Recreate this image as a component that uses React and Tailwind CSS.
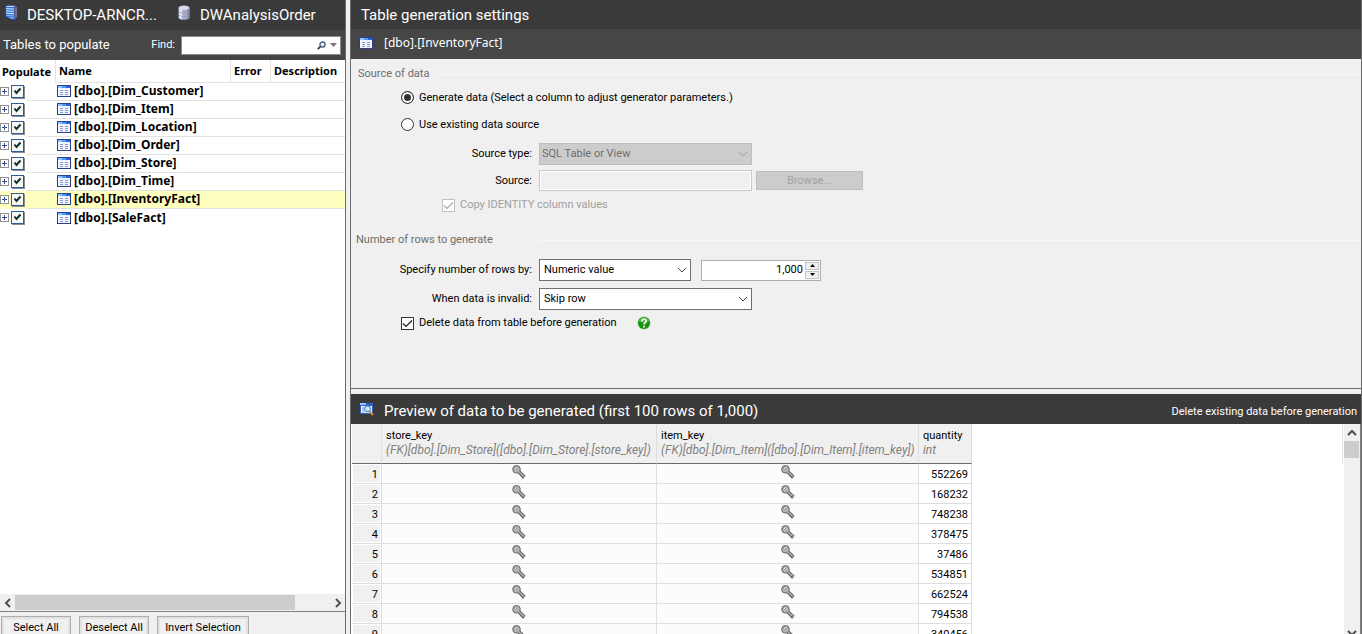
import React, { useState } from "react";

const TABLES = [
  "[dbo].[Dim_Customer]",
  "[dbo].[Dim_Item]",
  "[dbo].[Dim_Location]",
  "[dbo].[Dim_Order]",
  "[dbo].[Dim_Store]",
  "[dbo].[Dim_Time]",
  "[dbo].[InventoryFact]",
  "[dbo].[SaleFact]",
];

const QUANTITIES = [552269, 168232, 748238, 378475, 37486, 534851, 662524, 794538, 340456];

function ServerIcon() {
  return (
    <svg width="16" height="16" viewBox="0 0 16 16" aria-hidden="true">
      <path d="M1 1.5 3 0h9l2 1.500v10.500l-2.500 3H8L1.500 12z" fill="#333a66" />
      <path d="M1.500 2H10l.5 12.500H8L2 11.500z" fill="#3474de" />
      <path d="M1.500 2 3.200.8h8.300L10 2z" fill="#b3cdf5" />
      <path d="M2 3.800 10 4M2 6l8 .3M2 8.200l8 .4" stroke="#cfe4ff" strokeWidth="1.100" />
      <path d="m2.500 10.400 7.500.6M5 12.600l5 .5" stroke="#8dbaf8" />
      <path d="M10.500 2.200 13 1.800v10l-2.500 3z" fill="#6c6f96" />
    </svg>
  );
}

function DatabaseIcon() {
  return (
    <svg width="14" height="16" viewBox="0 0 14 16" aria-hidden="true">
      <path d="M1.500 3v9.500c0 3 11 3 11 0V3z" fill="#a7adc6" />
      <path d="M2 3v9.500c0 1 1.300 1.700 3.300 1.900V4z" fill="#dfe3f3" />
      <path d="M10.500 4v10c1.300-.4 2-.9 2-1.500V3z" fill="#7a809e" />
      <ellipse cx="7" cy="2.800" rx="5.500" ry="2.200" fill="#d3d8ea" />
      <path d="M1.500 6.200c0 2.600 11 2.600 11 0M1.500 9.500c0 2.600 11 2.600 11 0" fill="none" stroke="#8f95b2" strokeWidth=".7" />
    </svg>
  );
}

function TableIcon() {
  return (
    <svg className="shrink-0" width="14" height="12" viewBox="0 0 14 12" shapeRendering="crispEdges" aria-hidden="true">
      <path d="M0 0h14v12H0z" fill="#2f3f86" />
      <path d="M1 3h12v8H1z" fill="#f0f4ff" />
      <path d="M1 1h4v2H1z" fill="#8fc4ff" />
      <path d="M5 1h4v2H5z" fill="#4f9af0" />
      <path d="M9 1h4v2H9z" fill="#1f66d8" />
      <path d="M3 5.500h3M3 7.500h3M3 9.500h3M8 5.500h3M8 7.500h3M8 9.500h3" stroke="#8a9bcb" />
    </svg>
  );
}

function PreviewIcon() {
  return (
    <svg width="14" height="13" viewBox="0 0 14 13" aria-hidden="true">
      <path d="M0 0h13v11H0z" fill="#2d5fc4" />
      <path d="M1 3h11v7H1z" fill="#e9f1ff" />
      <path d="M0 0h6v2H0z" fill="#8fc4ff" />
      <path d="M2 5h2M2 7h2M2 9h2" stroke="#7d93cc" />
      <circle cx="7.500" cy="5.800" r="3" fill="#c5e6fb" stroke="#3a6ea8" />
      <path d="m9.800 8.500 3.200 3.500" stroke="#d98a3c" strokeWidth="2" />
    </svg>
  );
}

function KeyIcon() {
  return (
    <svg className="mx-auto mt-px" width="14" height="14" viewBox="0 0 14 14" aria-hidden="true">
      <path d="m6.500 6.500 5.800 5.600" stroke="#5a5a5a" strokeWidth="3.600" />
      <path d="m9 11.500 1.500-1.700m0 3.500 1.500-1.500" stroke="#5a5a5a" strokeWidth="1.200" />
      <circle cx="4.500" cy="4.300" r="3.800" fill="#b5b5b5" stroke="#636363" />
      <path d="m6.500 6.500 5.500 5.200" stroke="#b0b0b0" strokeWidth="1.600" />
      <circle cx="3.400" cy="3.200" r="1.100" fill="#f8f8f8" stroke="#777" strokeWidth=".6" />
    </svg>
  );
}

function SearchIcon() {
  return (
    <svg width="9" height="9" viewBox="0 0 9 9" aria-hidden="true">
      <circle cx="5.500" cy="3.500" r="2.600" fill="#d9ecfa" stroke="#3f5573" strokeWidth="1.200" />
      <path d="M3.600 5.400.8 8.200" stroke="#2f3d52" strokeWidth="1.800" />
    </svg>
  );
}

function HelpIcon() {
  return (
    <svg width="14" height="14" viewBox="0 0 14 14" aria-hidden="true">
      <circle cx="7" cy="7" r="6.800" fill="#b9dcb4" />
      <circle cx="7" cy="7" r="6" fill="#17920f" />
      <path d="M1.800 5.500a5.400 5.400 0 0 1 10.400 0c-3 1.500-7 1.500-10.400 0z" fill="#46b83c" />
      <path d="M4.900 5.400c0-2.900 4.300-2.800 4.300-.3C9.200 6.700 7 6.700 7 8.600M7 9.700v1.700" fill="none" stroke="#fff" strokeWidth="1.700" />
    </svg>
  );
}

function Chevron({ dir = "down", className = "" }) {
  const paths = { down: "M1 3l4 4 4-4", up: "M1 7l4-4 4 4", left: "M7 1 3 5l4 4", right: "M3 1l4 4-4 4" };
  return (
    <svg className={className} width="10" height="10" viewBox="0 0 10 10" fill="none" stroke="currentColor" aria-hidden="true">
      <path d={paths[dir]} />
    </svg>
  );
}

function CheckBox({ id, label, tree, disabled }) {
  const [on, setOn] = useState(true);
  const look = tree
    ? "border-[#2d5f96] bg-[#f6f6f2] shadow-[1px_1px_0_#8d8d8d] text-[#0b3030]"
    : disabled
      ? "border-[#c0c0c0] bg-white text-[#a8a8a8]"
      : "border-[#333] bg-white text-[#222]";
  return (
    <span className={`relative block size-[13px] shrink-0 ${look}`}>
      <input
        id={id}
        type="checkbox"
        aria-label={label}
        checked={on}
        disabled={disabled}
        onChange={(e) => setOn(e.target.checked)}
        className={`block size-[13px] appearance-none border ${look}`}
      />
      {on && (
        <svg className="pointer-events-none absolute inset-0" width="13" height="13" viewBox="0 0 13 13" fill="none" stroke="currentColor" aria-hidden="true">
          <path d={tree ? "M3.500 5.500 5.500 8l4-4.500" : "M2 6.500 5 9.500 11 3.500"} strokeWidth={tree ? 2 : 1.200} />
        </svg>
      )}
    </span>
  );
}

function Select({ id, value, className, disabled }) {
  return (
    <span className={`relative block h-[22px] ${className}`}>
      <select
        id={id}
        disabled={disabled}
        className={`block h-full w-full appearance-none border px-1 leading-4 opacity-100 ${
          disabled ? "border-[#bfbfbf] bg-[#ccc] px-[2px] text-[#6d6d6d]" : "border-[#707070] bg-white text-black"
        }`}
      >
        <option>{value}</option>
      </select>
      <Chevron className={`pointer-events-none absolute top-[6px] right-1 ${disabled ? "text-[#a0a0a0]" : "text-[#444]"}`} />
    </span>
  );
}

function Legend({ children, className = "", titleWidth }) {
  return (
    <div className={`flex h-4 items-center text-[#6d6d6d] ${className}`}>
      <h3 className={`shrink-0 ${titleWidth}`}>{children}</h3>
      <span className="h-px flex-1 bg-[#f9f9f9]" />
    </div>
  );
}

const fieldLabel = "w-[181px] shrink-0 text-right";
const footerButton = "h-[23px] shrink-0 border border-[#adadad] bg-[#f0f0f0] inset-ring-2 inset-ring-[#e2e2e2]";

function TablesPanel() {
  return (
    <aside className="flex w-[346px] shrink-0 flex-col border-r border-[#6b6b6b] bg-white">
      <header className="flex h-[30px] shrink-0 items-center bg-[#3a3a3a] pl-[4px] text-[15px] text-white">
        <span className="pb-1"><ServerIcon /></span>
        <h1 className="w-[157px] truncate pl-[7px]">DESKTOP-ARNCR...</h1>
        <span className="pb-1"><DatabaseIcon /></span>
        <span className="pl-[9px]">DWAnalysisOrder</span>
      </header>
      <div className="flex h-[30px] shrink-0 items-center bg-[#464646] pr-1 pl-[3px] text-white">
        <h2 className="flex-1 text-[13px]">Tables to populate</h2>
        <label htmlFor="find" className="pr-[6px]">Find:</label>
        <div className="flex h-[19px] w-[160px] items-center gap-1 border border-[#8a8a8a] bg-white pr-[3px] text-black">
          <input id="find" className="h-full min-w-0 flex-1 px-1 outline-none" />
          <SearchIcon />
          <svg width="7" height="4" viewBox="0 0 7 4" aria-hidden="true"><path d="M0 0h7L3.500 4z" fill="#777" /></svg>
        </div>
      </div>
      <div className="min-h-0 flex-1 overflow-hidden">
        <table className="w-full table-fixed border-separate border-spacing-0 text-left font-['Noto_Sans',sans-serif] font-bold">
          <colgroup>
            <col className="w-[27px]" />
            <col className="w-[29px]" />
            <col className="w-[175px]" />
            <col className="w-[40px]" />
            <col />
          </colgroup>
          <thead>
            <tr className="h-[23px]">
              <th colSpan={2} className="border-r border-[#e2e2e2] pl-[2px]">Populate</th>
              <th className="border-r border-b border-[#e2e2e2] pl-[3px]">Name</th>
              <th className="border-r border-b border-[#e2e2e2] pl-[3px]">Error</th>
              <th className="border-b border-[#e2e2e2] pl-[3px]">Description</th>
            </tr>
          </thead>
          <tbody>
            {TABLES.map((name) => (
              <tr key={name} className={`group h-[18px] ${name.includes("Inventory") ? "bg-[#ffffbf]" : ""}`}>
                <td className="pb-[2px]">
                  <span className="flex items-center gap-[2px]">
                    <button aria-label={`Expand ${name}`} className="grid size-[9px] place-items-center border border-[#919191] bg-white">
                      <svg width="5" height="5" viewBox="0 0 5 5" stroke="#34508c" aria-hidden="true"><path d="M0 2.500h5M2.500 0v5" /></svg>
                    </button>
                    <CheckBox tree label={`Populate ${name}`} />
                  </span>
                </td>
                <td className="border-b border-[#e2e2e2] group-last:border-b-0" />
                <td colSpan={3} className="border-b border-[#e2e2e2] pb-px group-last:border-b-0">
                  <span className="flex items-center gap-[3px] pl-px text-[12px] leading-4">
                    <TableIcon />
                    {name}
                  </span>
                </td>
              </tr>
            ))}
          </tbody>
        </table>
      </div>
      <div className="flex h-[17px] shrink-0 items-center bg-[#f0f0f0] text-[#505050]">
        <button aria-label="Scroll left" className="grid w-[15px] place-items-center"><Chevron dir="left" className="stroke-2" /></button>
        <div className="flex h-[15px] flex-1"><span className="w-[89%] bg-[#cdcdcd]" /></div>
        <button aria-label="Scroll right" className="grid w-[15px] place-items-center"><Chevron dir="right" className="stroke-2" /></button>
      </div>
      <footer className="flex h-[23px] shrink-0 items-start gap-2 overflow-hidden border-t border-[#7f8089] bg-[#f0f0f0] pt-1 pl-px">
        <button className={`w-[70px] ${footerButton}`}>Select All</button>
        <button className={`w-[70px] ${footerButton}`}>Deselect All</button>
        <button className={`w-[92px] ${footerButton}`}>Invert Selection</button>
      </footer>
    </aside>
  );
}

function Settings() {
  const radio =
    "size-[13px] appearance-none rounded-full border border-[#333] bg-white checked:bg-[#333] checked:inset-ring-2 checked:inset-ring-white";
  return (
    <section className="flex shrink-0 flex-col border-b border-[#6b6b6b]">
      <header className="flex h-[29px] items-center bg-[#3a3a3a] pl-[10px] text-[15px] text-white">
        <h2>Table generation settings</h2>
      </header>
      <div className="flex h-[30px] items-center gap-[11px] bg-[#464646] pb-[2px] pl-[8px] text-white">
        <TableIcon />
        <span className="font-['Noto_Sans',sans-serif] text-[12px]">[dbo].[InventoryFact]</span>
      </div>
      <form className="flex h-[329px] flex-col pt-[7px]">
        <Legend className="pl-[7px]" titleWidth="w-[81px]">Source of data</Legend>
        <div className="flex h-[27px] items-center gap-[5px] pt-1 pl-[50px]">
          <input id="gen" type="radio" name="source" defaultChecked className={radio} />
          <label htmlFor="gen">Generate data (Select a column to adjust generator parameters.)</label>
        </div>
        <div className="flex h-[27px] items-center gap-[5px] pt-1 pl-[50px]">
          <input id="existing" type="radio" name="source" className={radio} />
          <label htmlFor="existing">Use existing data source</label>
        </div>
        <div className="mt-[7px] flex items-center gap-[7px]">
          <label htmlFor="stype" className={fieldLabel}>Source type:</label>
          <Select id="stype" value="SQL Table or View" disabled className="w-[213px]" />
        </div>
        <div className="mt-[5px] flex items-center gap-[7px]">
          <label htmlFor="src" className={fieldLabel}>Source:</label>
          <div className="flex items-center gap-1">
            <input id="src" disabled className="h-[21px] w-[213px] border border-[#c8c8c8] bg-[#f0f0f0] inset-ring inset-ring-white" />
            <button type="button" disabled className="h-[19px] w-[107px] border border-[#bfbfbf] bg-[#ccc] text-[#a0a0a0]">Browse...</button>
          </div>
        </div>
        <div className="mt-[5px] flex h-[18px] items-center gap-[5px] pl-[91px]">
          <CheckBox id="copy" disabled />
          <label htmlFor="copy" className="text-[#a0a0a0]">Copy IDENTITY column values</label>
        </div>
        <Legend className="mt-[18px] pl-[5px]" titleWidth="w-[183px]">Number of rows to generate</Legend>
        <div className="mt-[11px] flex items-center gap-[7px]">
          <label htmlFor="by" className={fieldLabel}>Specify number of rows by:</label>
          <Select id="by" value="Numeric value" className="w-[152px]" />
          <div className="ml-[3px] flex h-[21px] w-[120px] items-center border border-[#adadad] bg-white pr-px">
            <input aria-label="Number of rows" defaultValue="1,000" className="min-w-0 flex-1 pr-[2px] text-right outline-none" />
            <span className="flex w-[14px] flex-col gap-px">
              <button type="button" aria-label="Increase" className="grid h-2 place-items-center border border-[#c4c4c4] bg-[#f0f0f0]">
                <svg width="5" height="3" viewBox="0 0 5 3" aria-hidden="true"><path d="M0 3h5L2.500 0z" /></svg>
              </button>
              <button type="button" aria-label="Decrease" className="grid h-2 place-items-center border border-[#c4c4c4] bg-[#f0f0f0]">
                <svg width="5" height="3" viewBox="0 0 5 3" aria-hidden="true"><path d="M0 0h5L2.500 3z" /></svg>
              </button>
            </span>
          </div>
        </div>
        <div className="mt-[7px] flex items-center gap-[7px]">
          <label htmlFor="invalid" className={fieldLabel}>When data is invalid:</label>
          <Select id="invalid" value="Skip row" className="w-[213px]" />
        </div>
        <div className="mt-[3px] flex h-5 items-center gap-[5px] pl-[50px]">
          <CheckBox id="del" />
          <label htmlFor="del" className="w-[213px]">Delete data from table before generation</label>
          <button type="button" aria-label="Help"><HelpIcon /></button>
        </div>
      </form>
    </section>
  );
}

function Preview() {
  const keyCell = "border-r border-b border-[#dedede] bg-[#fafcfe] align-top";
  return (
    <section className="mt-[5px] flex min-h-0 flex-1 flex-col bg-white">
      <header className="flex h-[30px] shrink-0 items-center bg-[#3a3a3a] pr-1 pl-[9px] text-white">
        <PreviewIcon />
        <h2 className="flex-1 pt-1 pl-[10px] text-[15px]">Preview of data to be generated (first 100 rows of 1,000)</h2>
        <span className="pt-[6px]">Delete existing data before generation</span>
      </header>
      <div className="flex min-h-0 flex-1">
        <div className="min-w-0 flex-1 overflow-hidden pl-px">
          <table className="w-[620px] table-fixed border-separate border-spacing-0 text-left">
            <thead>
              <tr className="h-10 bg-[#f0f0f0]">
                <td className="w-[30px] border-r border-b border-r-[#dedede] border-b-[#6b6b6b]" />
                {[
                  ["store_key", "(FK)[dbo].[Dim_Store]([dbo].[Dim_Store].[store_key])", "w-[275px]"],
                  ["item_key", "(FK)[dbo].[Dim_Item]([dbo].[Dim_Item].[item_key])", "w-[262px]"],
                  ["quantity", "int", "w-[53px]"],
                ].map(([name, type, width]) => (
                  <th key={name} className={`border-r border-b border-r-[#dedede] border-b-[#6b6b6b] px-1 pt-1 align-top font-normal ${width}`}>
                    <span className="block leading-4">{name}</span>
                    <span className="block text-[12px] leading-3 whitespace-nowrap text-[#808080] italic">{type}</span>
                  </th>
                ))}
              </tr>
            </thead>
            <tbody>
              {QUANTITIES.map((q, i) => (
                <tr key={q} className="h-5">
                  <td className="border-r border-b border-[#dedede] bg-[#f0f0f0] pt-[2px] pr-[3px] text-right inset-ring inset-ring-white">{i + 1}</td>
                  <td className={keyCell}><KeyIcon /></td>
                  <td className={keyCell}><KeyIcon /></td>
                  <td className="border-r border-b border-[#dedede] pt-[2px] pr-[3px] text-right">{q}</td>
                </tr>
              ))}
            </tbody>
          </table>
        </div>
        <span className="mr-px h-10 w-px shrink-0 bg-[#e2e2e2]" />
        <div className="flex w-[17px] shrink-0 flex-col items-center border-r border-[#7d838c] bg-[#f0f0f0] text-[#505050]">
          <button aria-label="Scroll up" className="grid h-[17px] w-full shrink-0 place-items-center"><Chevron dir="up" className="stroke-2" /></button>
          <div className="w-full flex-1 pr-px"><span className="block h-[17px] bg-[#cdcdcd]" /></div>
          <button aria-label="Scroll down" className="grid h-[6px] w-full shrink-0 place-items-center"><Chevron className="stroke-2" /></button>
        </div>
      </div>
    </section>
  );
}

export default function App() {
  return (
    <div className="flex h-screen overflow-hidden bg-[#f0f0f0] font-[Roboto,'Noto_Sans',sans-serif] text-[11px] leading-4 text-black">
      <TablesPanel />
      <main className="ml-1 flex min-w-0 flex-1 flex-col border-x border-[#6b6b6b]">
        <Settings />
        <Preview />
      </main>
    </div>
  );
}
